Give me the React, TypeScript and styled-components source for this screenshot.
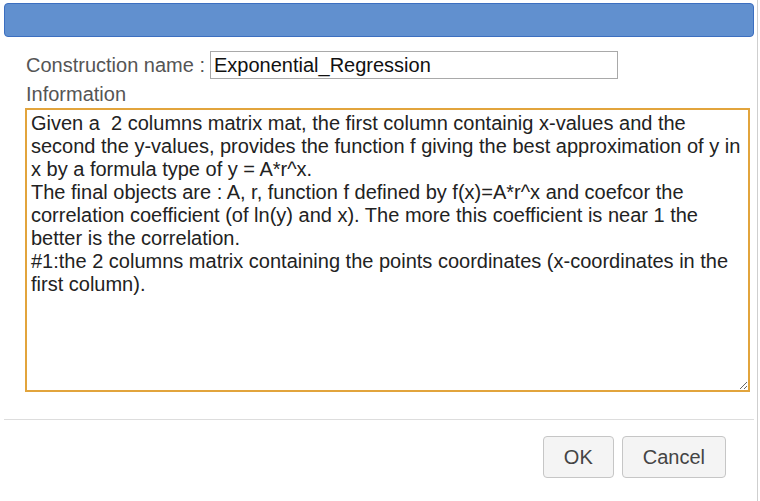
import React, { useEffect, useRef } from "react";
import styled, { createGlobalStyle } from "styled-components";

const GlobalStyle = createGlobalStyle`
  html, body {
    margin: 0;
    padding: 0;
    background: #ffffff;
    font-family: "Liberation Sans", Arial, sans-serif;
  }
  * { box-sizing: border-box; }
`;

const Dialog = styled.div`
  width: 758px;
  height: 501px;
  border-right: 1px solid #cfcfcf;
  padding: 3px 3px 0 4px;
  display: flex;
  flex-direction: column;
  background: #fff;
`;

const TitleBar = styled.div`
  height: 34px;
  background: #6190cf;
  border: 1px solid #3c6fc0;
  border-radius: 4px;
  flex-shrink: 0;
`;

const Body = styled.div`
  padding: 14px 0 0 21px;
  display: flex;
  flex-direction: column;
`;

const NameRow = styled.div`
  display: flex;
  align-items: center;
  height: 28px;
`;

const Label = styled.label`
  font-size: 20px;
  line-height: 23px;
  color: #555;
  padding-left: 1px;
`;

const NameLabel = styled(Label)`
  margin-right: 5px;
`;

const InfoLabel = styled(Label)`
  margin-top: 4px;
  display: block;
`;

const NameInput = styled.input`
  width: 408px;
  height: 28px;
  border: 1px solid #a9a9a9;
  padding: 0 3px;
  font-family: "Liberation Sans", Arial, sans-serif;
  font-size: 20px;
  color: #111;
  outline: none;
  background: #fff;
`;

const InfoArea = styled.textarea`
  width: 725px;
  height: 284px;
  margin-top: 2px;
  border: 2px solid #e2a43c;
  padding: 2px 4px;
  font-family: "Liberation Sans", Arial, sans-serif;
  font-size: 20px;
  line-height: 23px;
  color: #222;
  outline: none;
  resize: both;
  overflow: hidden;
  background: #fff;
`;

const Separator = styled.div`
  height: 1px;
  background: #dddddd;
  margin-top: 27px;
  width: 750px;
`;

const Footer = styled.div`
  display: flex;
  justify-content: flex-end;
  gap: 8px;
  padding: 16px 28px 0 0;
  width: 750px;
`;

const Button = styled.button`
  height: 42px;
  padding: 0 20px;
  border: 1px solid #c6c6c6;
  border-radius: 4px;
  background: #f4f4f4;
  color: #444;
  font-family: "Liberation Sans", Arial, sans-serif;
  font-size: 20px;
  cursor: pointer;
`;

const INFO =
  "Given a  2 columns matrix mat, the first column containig x-values and the second the y-values, provides the function f giving the best approximation of y in x by a formula type of y = A*r^x.\n" +
  "The final objects are : A, r, function f defined by f(x)=A*r^x and coefcor the correlation coefficient (of ln(y) and x). The more this coefficient is near 1 the better is the correlation.\n" +
  "#1:the 2 columns matrix containing the points coordinates (x-coordinates in the first column).";

export default function App() {
  const ref = useRef<HTMLTextAreaElement>(null);
  useEffect(() => {
    const el = ref.current;
    if (el) {
      const pos = INFO.indexOf("#1:") + 3;
      el.focus();
      el.setSelectionRange(pos, pos);
    }
  }, []);
  return (
    <>
      <GlobalStyle />
      <Dialog>
        <TitleBar />
        <Body>
          <NameRow>
            <NameLabel htmlFor="cname">Construction name :</NameLabel>
            <NameInput id="cname" defaultValue="Exponential_Regression" />
          </NameRow>
          <InfoLabel htmlFor="cinfo">Information</InfoLabel>
          <InfoArea id="cinfo" ref={ref} defaultValue={INFO} spellCheck={false} />
        </Body>
        <Separator />
        <Footer>
          <Button>OK</Button>
          <Button>Cancel</Button>
        </Footer>
      </Dialog>
    </>
  );
}
